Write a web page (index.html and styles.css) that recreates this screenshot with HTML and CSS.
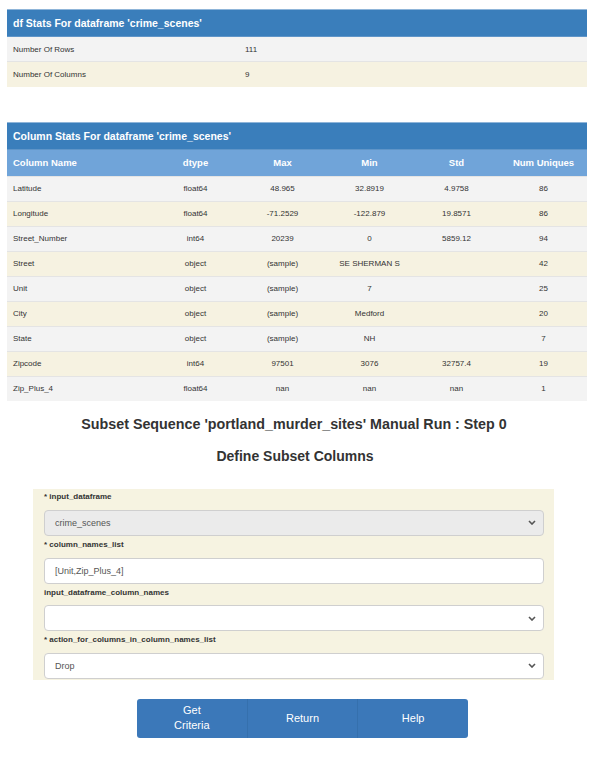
FILE: index.html
```html
<!DOCTYPE html>
<html>
<head>
<meta charset="utf-8">
<link rel="stylesheet" href="styles.css">
</head>
<body>
<table class="stats df-stats">
  <colgroup><col class="c40"><col></colgroup>
  <tr><th class="title" colspan="2">df Stats For dataframe 'crime_scenes'</th></tr>
  <tr class="odd"><td>Number Of Rows</td><td>111</td></tr>
  <tr class="even"><td>Number Of Columns</td><td>9</td></tr>
</table>

<table class="stats col-stats">
  <colgroup><col class="c25"><col class="c15"><col class="c15"><col class="c15"><col class="c15"><col class="c15"></colgroup>
  <tr><th class="title" colspan="6">Column Stats For dataframe 'crime_scenes'</th></tr>
  <tr class="heads"><th class="left">Column Name</th><th>dtype</th><th>Max</th><th>Min</th><th>Std</th><th>Num Uniques</th></tr>
  <tr class="odd"><td class="left">Latitude</td><td>float64</td><td>48.965</td><td>32.8919</td><td>4.9758</td><td>86</td></tr>
  <tr class="even"><td class="left">Longitude</td><td>float64</td><td>-71.2529</td><td>-122.879</td><td>19.8571</td><td>86</td></tr>
  <tr class="odd"><td class="left">Street_Number</td><td>int64</td><td>20239</td><td>0</td><td>5859.12</td><td>94</td></tr>
  <tr class="even"><td class="left">Street</td><td>object</td><td>(sample)</td><td>SE SHERMAN S</td><td></td><td>42</td></tr>
  <tr class="odd"><td class="left">Unit</td><td>object</td><td>(sample)</td><td>7</td><td></td><td>25</td></tr>
  <tr class="even"><td class="left">City</td><td>object</td><td>(sample)</td><td>Medford</td><td></td><td>20</td></tr>
  <tr class="odd"><td class="left">State</td><td>object</td><td>(sample)</td><td>NH</td><td></td><td>7</td></tr>
  <tr class="even"><td class="left">Zipcode</td><td>int64</td><td>97501</td><td>3076</td><td>32757.4</td><td>19</td></tr>
  <tr class="odd"><td class="left">Zip_Plus_4</td><td>float64</td><td>nan</td><td>nan</td><td>nan</td><td>1</td></tr>
</table>

<h2 class="seq-title">Subset Sequence 'portland_murder_sites' Manual Run : Step 0</h2>
<h3 class="sub-title">Define Subset Columns</h3>

<form class="subset-form">
  <div class="label first">* input_dataframe</div>
  <div class="field select disabled"><span>crime_scenes</span><svg class="chev" width="8" height="5" viewBox="0 0 8 5"><path d="M1 1 L4 4 L7 1" fill="none" stroke="#555" stroke-width="1.6"/></svg></div>
  <div class="label">* column_names_list</div>
  <div class="field input"><span>[Unit,Zip_Plus_4]</span></div>
  <div class="label">input_dataframe_column_names</div>
  <div class="field select"><span></span><svg class="chev" width="8" height="5" viewBox="0 0 8 5"><path d="M1 1 L4 4 L7 1" fill="none" stroke="#555" stroke-width="1.6"/></svg></div>
  <div class="label">* action_for_columns_in_column_names_list</div>
  <div class="field select"><span>Drop</span><svg class="chev" width="8" height="5" viewBox="0 0 8 5"><path d="M1 1 L4 4 L7 1" fill="none" stroke="#555" stroke-width="1.6"/></svg></div>
</form>

<div class="buttons">
  <button class="btn">Get<br>Criteria</button>
  <button class="btn">Return</button>
  <button class="btn">Help</button>
</div>
</body>
</html>
```
FILE: styles.css
```css
html, body {
  margin: 0;
  background: #ffffff;
}
body {
  padding: 9px 8px 0 7px;
  font-family: "Liberation Sans", Arial, sans-serif;
  color: #333333;
}
.stats {
  width: 580px;
  border-collapse: collapse;
  table-layout: fixed;
}
.c40 { width: 40%; }
.c25 { width: 25%; }
.c15 { width: 15%; }
.stats th.title {
  background: #3a7ebb;
  color: #ffffff;
  font-size: 10.5px;
  font-weight: bold;
  text-align: left;
  height: 27px;
  padding: 0 0 0 6px;
  box-sizing: border-box;
  border-top: 1px solid #8fb5d9;
  border-bottom: 1px solid #5f95c8;
}
.stats td {
  font-size: 8px;
  height: 25px;
  padding: 0 6px;
  box-sizing: border-box;
  border-top: 1px solid #e4e4e4;
  color: #333333;
}
.df-stats td { text-align: left; }
.col-stats td, .col-stats .heads th { text-align: center; }
.col-stats td.left, .col-stats .heads th.left { text-align: left; }
.odd td { background: #f3f3f3; }
.even td { background: #f6f2e1; }
.heads th {
  background: #70a4d9;
  color: #ffffff;
  font-size: 9.5px;
  font-weight: bold;
  height: 27px;
  padding: 0 6px;
  box-sizing: border-box;
}
.col-stats { margin-top: 35px; }
.seq-title {
  margin: 14px 0 0;
  padding-right: 6px;
  text-align: center;
  font-size: 14.3px;
  line-height: 18px;
  font-weight: bold;
  color: #333333;
}
.sub-title {
  margin: 14px 0 0;
  padding-right: 4px;
  text-align: center;
  font-size: 14px;
  line-height: 18px;
  font-weight: bold;
  color: #333333;
}
.subset-form {
  margin: 24px 0 0 26px;
  width: 521px;
  box-sizing: border-box;
  background: #f6f3e1;
  padding: 0 10px 1px 11px;
}
.label {
  font-size: 8px;
  font-weight: bold;
  line-height: 10px;
  padding: 4px 0 7.67px;
  color: #333333;
}
.label.first { padding-top: 3.33px; }
.field {
  height: 26px;
  box-sizing: border-box;
  border: 1px solid #cfcfcf;
  border-radius: 4px;
  background: #ffffff;
  display: flex;
  align-items: center;
  justify-content: space-between;
  padding: 0 7px 0 10px;
  font-size: 9px;
  color: #555555;
}
.field.disabled { background: #ebebeb; }
.chev { flex: none; }
.buttons {
  margin: 19px 0 0 130px;
  display: flex;
  width: 331px;
  height: 39px;
  border-radius: 3px;
  overflow: hidden;
}
.btn {
  flex: 1 1 0;
  height: 39px;
  border: none;
  border-right: 1px solid #3570ad;
  background: #3b78b9;
  color: #ffffff;
  font-family: "Liberation Sans", Arial, sans-serif;
  font-size: 11px;
  line-height: 15px;
  padding: 0;
}
.btn:last-child { border-right: none; }
```
